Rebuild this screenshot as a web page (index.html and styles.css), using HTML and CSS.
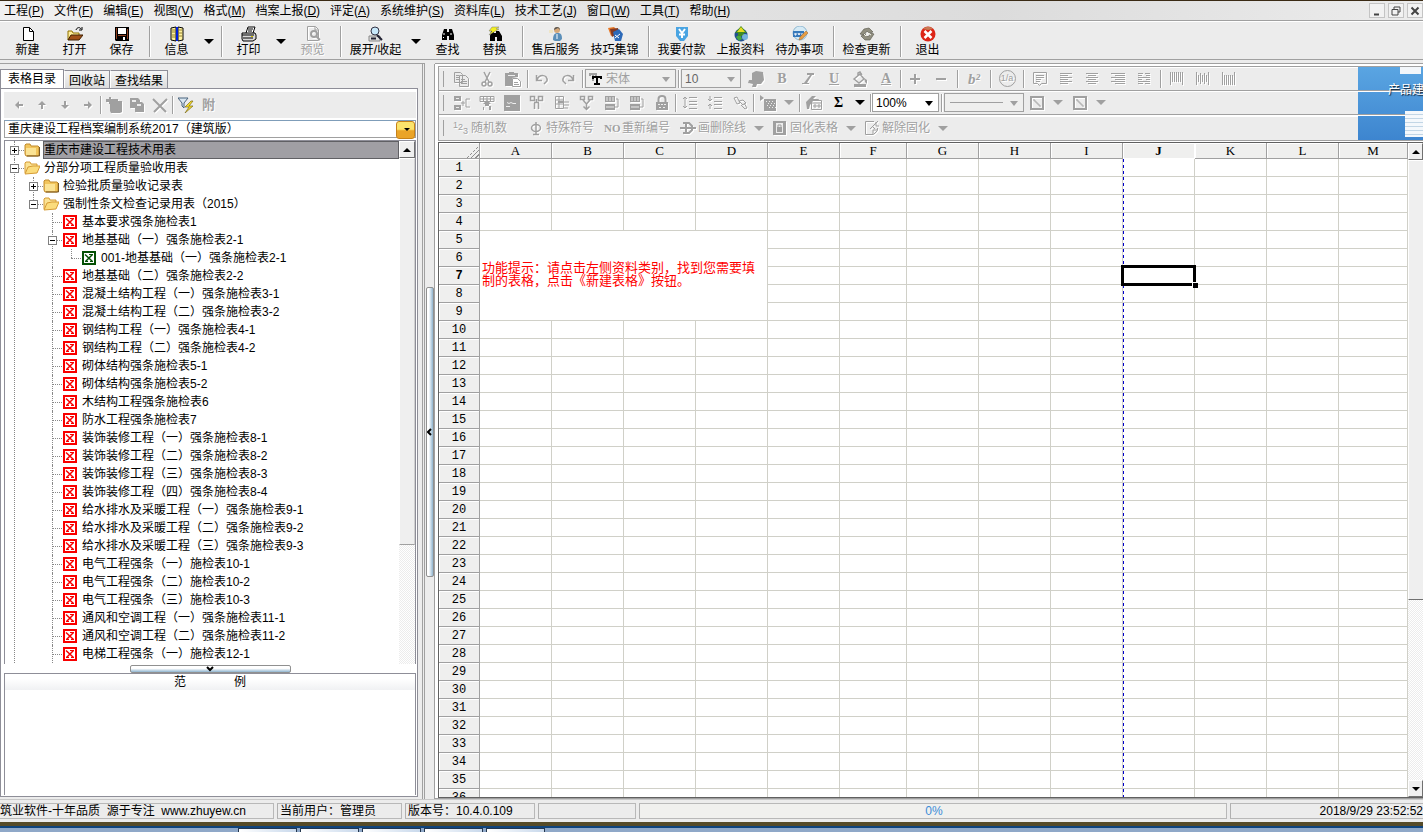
FILE: index.html
```html
<!DOCTYPE html>
<html lang="zh-CN">
<head>
<meta charset="utf-8">
<title>重庆建设工程档案编制系统2017</title>
<link rel="stylesheet" href="styles.css">
</head>
<body>
<svg class="sprite" aria-hidden="true">
  <symbol id="xls" viewBox="0 0 14 14"><path fill="currentColor" d="M0 0h14v14H0z"/><path fill="#fff" d="M2 2h10v10H2z"/><path d="M3 3.500l7.500 7M10.500 3.500L3.500 10.500" stroke="currentColor" stroke-width="1.500"/><path fill="currentColor" d="M7 3h4v1H7zM8 10h3v1H8zM3 10h3v1H3z"/></symbol>
  <symbol id="folder" viewBox="0 0 16 14"><path d="M1 11V2l1-1h4l1 2h7l1 1v8l-1 1H2z" fill="#f2c55c" stroke="#c08a2c"/><path d="M2 5h10v7H2z" fill="#fbe394"/><path d="M3 13h12.500V4" fill="none" stroke="#7a5a28"/></symbol>
  <symbol id="folder-open" viewBox="0 0 16 14"><path d="M1 12V2l1-1h4l1 2h6v3" fill="#fbe394" stroke="#d69b34"/><path d="M1 13L4 6l5-1h7l-3 7z" fill="#fbdc7c" stroke="#d69b34"/></symbol>
  <symbol id="merge" viewBox="0 0 16 16"><path d="M0 1h7v5H0zM0 10h7v5H0z" fill="currentColor"/><path d="M2 3h3v1H2zM2 12h3v1H2z" fill="#ececec"/><path d="M7 8h4M9 6v5M16 4h-4v8h4" fill="none" stroke="currentColor"/></symbol>
  <symbol id="layers" viewBox="0 0 16 16"><path d="M1 1h10v6H1zM1 9h10v6H1z" fill="currentColor"/><path d="M2 3h2m1 0h2m1 0h2M2 5h2m1 0h2m1 0h2M2 12h8" stroke="#ececec"/><path d="M12 4h2v8h-3" fill="none" stroke="currentColor"/></symbol>
  <symbol id="diagonal" viewBox="0 0 14 14"><path d="M1 1h12v12H1z" fill="none" stroke="currentColor" stroke-width="2"/><path d="M3 4h2v2h2v2h2v2h2" fill="none" stroke="currentColor"/></symbol>
</svg>

<nav class="menubar" aria-label="主菜单">
  <button>工程(<u>P</u>)</button><button>文件(<u>F</u>)</button><button>编辑(<u>E</u>)</button><button>视图(<u>V</u>)</button><button>格式(<u>M</u>)</button><button>档案上报(<u>D</u>)</button><button>评定(<u>A</u>)</button><button>系统维护(<u>S</u>)</button><button>资料库(<u>L</u>)</button><button>技术工艺(<u>J</u>)</button><button>窗口(<u>W</u>)</button><button>工具(<u>T</u>)</button><button>帮助(<u>H</u>)</button>
  <div class="mdi">
    <button aria-label="最小化"><svg viewBox="0 0 12 12"><path d="M3 9.500h5" stroke="#444" stroke-width="2"/></svg></button>
    <button aria-label="还原"><svg viewBox="0 0 12 12"><path d="M4 4V2h6v5H8M2 4.500h6V10H2z" fill="none" stroke="#444"/></svg></button>
    <button aria-label="关闭"><svg viewBox="0 0 12 12"><path d="M2.500 2.500l7 7m0-7l-7 7" stroke="#444" stroke-width="2"/></svg></button>
  </div>
</nav>

<div class="mainbar" role="toolbar" aria-label="常用">
  <button class="tool"><svg viewBox="0 0 16 16"><path d="M3.500 1.500h6l4 4v9h-10z" fill="#fff" stroke="#000"/><path d="M9.500 1.500v4h4" fill="none" stroke="#000"/></svg>新建</button>
  <button class="tool"><svg viewBox="0 0 16 16"><path d="M1 14V5h4l1 2h6v3" fill="#ffee9a" stroke="#907000"/><path d="M1 14l3-5h12l-4 5z" fill="#a05018" stroke="#402000"/><path d="M9 4c1-3 4-3 5-1m1-2v3h-3" fill="none" stroke="#000"/></svg>打开</button>
  <button class="tool"><svg viewBox="0 0 16 16"><path d="M1 1h14v14H2l-1-1z" fill="#000"/><path d="M4 2h8v6H4z" fill="#fff"/><path d="M2 2h1v11H2zm11 1h1v10h-1zM4 9h8v1H4z" fill="#904020"/><path d="M9 11h2v3H9z" fill="#fff"/></svg>保存</button>
  <span class="rule"></span>
  <button class="tool"><svg viewBox="0 0 16 16"><path d="M2 2l5-1v14l-5-1zM14 2L9 1v14l5-1z" fill="#fff2a0" stroke="#000"/><path d="M7 1h2v14H7z" fill="#0020e0"/><path d="M3 4h3M3 6h3M3 9h3M3 11h3M10 4h3M10 7h3M10 10h3" stroke="#665000" stroke-width=".7"/></svg>信息</button>
  <button class="drop" aria-label="信息选项"></button>
  <span class="rule"></span>
  <button class="tool"><svg viewBox="0 0 16 16"><path d="M5 7l2-6h7l-2 6" fill="#fff" stroke="#000"/><path d="M7 3h5M7 5h4" stroke="#000"/><path d="M1 7h13l1 2v4l-3 2H2l-1-2z" fill="#d8d8d8" stroke="#000"/><path d="M1 9h12M2 12h10" stroke="#000"/><path d="M10 10h2v1h-2z" fill="#d0c000"/></svg>打印</button>
  <button class="drop" aria-label="打印选项"></button>
  <button class="tool" disabled><svg viewBox="0 0 16 16"><path d="M2.500.500h8l3 3v11h-11zM10 1v3h3" fill="none" stroke="currentColor"/><circle cx="9" cy="8" r="3" fill="none" stroke="currentColor" stroke-width="2"/><path d="M11 10l4 4" stroke="currentColor" stroke-width="2"/></svg>预览</button>
  <span class="rule"></span>
  <button class="tool mid"><svg viewBox="0 0 16 16"><path d="M1 10h11v5H1z" fill="#ddd" stroke="#888"/><path d="M3 12.500h5M9 9l5 5" stroke="#223" stroke-width="2"/><circle cx="7" cy="5" r="4" fill="#c8e8fa" stroke="#334"/></svg>展开/收起</button>
  <button class="drop" aria-label="展开选项"></button>
  <button class="tool"><svg viewBox="0 0 16 16"><path d="M4 3h3v3h2V3h3l2 6v5H9v-4H7v4H2V9z"/><path d="M4 7v2M11 7v2M3.500 11v1" stroke="#fff"/></svg>查找</button>
  <button class="tool"><svg viewBox="0 0 16 16"><path d="M4 5h3v2h2V5h3l3 5v5h-5v-4H8v4H3v-5z"/><path d="M5 1h7L9 3h3L2 9l3-4H2z" fill="#f4f020" stroke="#777" stroke-width=".5"/></svg>替换</button>
  <span class="rule"></span>
  <button class="tool long"><svg viewBox="0 0 16 16"><path d="M5 14c0-6 2-7 5-7s4 2 4 6l-2 2H7z" fill="#5b8fb9"/><circle cx="9" cy="4" r="3" fill="#d6a878"/><path d="M6 4c0-4 6-4 6 0L10 2z" fill="#555"/><path d="M1 4h4v3H1z" fill="#efe6c8"/><path d="M9 8v5" stroke="#fff"/></svg>售后服务</button>
  <button class="tool long"><svg viewBox="0 0 16 16"><path d="M1 2l6-1 5 5-8 4z" fill="#e87824"/><path d="M3 3l8-1 1 5-7 4z" fill="#823a24"/><path d="M6 6l6-3 4 5-2 7H8z" fill="#2c69b8"/><path d="M8 9l4 3M8 12l5-4" stroke="#fff"/></svg>技巧集锦</button>
  <span class="rule"></span>
  <button class="tool long"><svg viewBox="0 0 16 16"><path d="M2 1h12v9l-4 5H6l-4-5z" fill="#49a4e2"/><path d="M5 3l3 4 3-4M8 7v5M5 8.500h6" fill="none" stroke="#fff" stroke-width="2"/></svg>我要付款</button>
  <button class="tool long"><svg viewBox="0 0 16 16"><circle cx="8" cy="9" r="6.500" fill="#204f91"/><path d="M3 11l4-3 2 5-3 2z" fill="#45a640"/><path d="M8 0l6 7h-3v3H5V7H2z" fill="#3f8a24"/><path d="M8 1l4 5H4z" fill="#e6dc20"/><circle cx="12" cy="11" r="3" fill="#76b3dd"/></svg>上报资料</button>
  <button class="tool long"><svg viewBox="0 0 16 16"><circle cx="8" cy="7" r="7" fill="#d5eaf5" stroke="#91b9d1"/><path d="M1 5h11v6H1z" fill="#3779bb"/><path d="M3 7v2h1V7m2 0l1 2 1-2m2 0v2" fill="none" stroke="#fff"/><path d="M7 14l1-3 6-6 2 2-6 6z" fill="#e59c43" stroke="#a0642a" stroke-width=".5"/></svg>待办事项</button>
  <span class="rule"></span>
  <button class="tool long"><svg viewBox="0 0 16 16"><path d="M1 8l4-5 5-1 4 4-4 1-2-2-3 4zM15 8l-4 6H6l-4-4 4-2 3 3 3-4z" fill="#918f80" stroke="#565448" stroke-width=".6"/><path d="M5 8l2 2 2-3 3 2" fill="none" stroke="#f7f6ed"/></svg>检查更新</button>
  <span class="rule"></span>
  <button class="tool"><svg viewBox="0 0 16 16"><circle cx="8" cy="8" r="7.500" fill="#dd2517"/><path d="M3 3c3-3 7-3 10 0L8 4z" fill="#c77a53"/><path d="M4.500 5l7 7m0-7l-7 7" stroke="#fff" stroke-width="2.500"/></svg>退出</button>
</div>

<main class="workspace">
  <section class="side">
    <div class="tabs" role="tablist">
      <button role="tab" class="tab on" aria-selected="true">表格目录</button>
      <button role="tab" class="tab">回收站</button>
      <button role="tab" class="tab">查找结果</button>
    </div>
    <div class="sidebody">
      <div class="sidebar-tools" role="toolbar" aria-label="目录工具">
        <button disabled aria-label="左移"><svg viewBox="0 0 16 16"><path d="M4 8l4-4v3h4v2H8v3z" fill="currentColor"/></svg></button>
        <button disabled aria-label="上移"><svg viewBox="0 0 16 16"><path d="M8 4l4 4H9v4H7V8H4z" fill="currentColor"/></svg></button>
        <button disabled aria-label="下移"><svg viewBox="0 0 16 16"><path d="M8 12L4 8h3V4h2v4h3z" fill="currentColor"/></svg></button>
        <button disabled aria-label="右移"><svg viewBox="0 0 16 16"><path d="M12 8L8 12V9H4V7h4V4z" fill="currentColor"/></svg></button>
        <span class="vr"></span>
        <button disabled aria-label="新建表格"><svg viewBox="0 0 16 16"><path d="M3 0h2v2h7v2h4v11l-2 1H5l-1-2V7H3V5H0V2h3z" fill="currentColor"/></svg></button>
        <button disabled aria-label="复制表格"><svg viewBox="0 0 16 16"><path d="M1 1h8l2 2v2h2l2 2v8H6v-4H1z" fill="currentColor"/><path d="M3 3h4v2H3zM8 7h4v2H8z" fill="#ececec"/></svg></button>
        <button disabled aria-label="删除表格"><svg viewBox="0 0 16 16"><path d="M1 2l13 13M15 2L2 15" stroke="currentColor" stroke-width="2"/></svg></button>
        <span class="vr"></span>
        <button aria-label="筛选"><svg viewBox="0 0 16 16"><path d="M0 1h10L6 6v5L4 9V6z" fill="#d9e6f0" stroke="#49637c"/><path d="M13 4l-6 6h4l-4 6 8-7h-4l4-5z" fill="#f6de22" stroke="#7d6c1d" stroke-width=".7"/></svg></button>
        <button class="attach" disabled>附</button>
      </div>
      <label class="combo system"><select aria-label="资料系统"><option>重庆建设工程档案编制系统2017（建筑版）</option></select></label>
      <div class="treebox">
        <ul class="tree">
          <li><div class="row"><button class="toggle plus" aria-label="展开"></button><i></i><svg class="fold"><use href="#folder"/></svg><span class="label picked">重庆市建设工程技术用表</span></div></li>
          <li><div class="row"><button class="toggle" aria-label="折叠"></button><i></i><svg class="fold"><use href="#folder-open"/></svg><span class="label">分部分项工程质量验收用表</span></div>
            <ul>
              <li><div class="row"><button class="toggle plus" aria-label="展开"></button><i></i><svg class="fold"><use href="#folder"/></svg><span class="label">检验批质量验收记录表</span></div></li>
              <li class="end"><div class="row"><button class="toggle" aria-label="折叠"></button><i></i><svg class="fold"><use href="#folder-open"/></svg><span class="label">强制性条文检查记录用表（2015）</span></div>
                <ul>
                  <li><div class="row leaf"><i></i><svg class="xls"><use href="#xls"/></svg><span class="label">基本要求强条施检表1</span></div></li>
                  <li><div class="row"><button class="toggle" aria-label="折叠"></button><i></i><svg class="xls"><use href="#xls"/></svg><span class="label">地基基础（一）强条施检表2-1</span></div>
                    <ul><li class="end"><div class="row leaf"><i></i><svg class="xls green"><use href="#xls"/></svg><span class="label">001-地基基础（一）强条施检表2-1</span></div></li></ul></li>
                  <li><div class="row leaf"><i></i><svg class="xls"><use href="#xls"/></svg><span class="label">地基基础（二）强条施检表2-2</span></div></li>
                  <li><div class="row leaf"><i></i><svg class="xls"><use href="#xls"/></svg><span class="label">混凝土结构工程（一）强条施检表3-1</span></div></li>
                  <li><div class="row leaf"><i></i><svg class="xls"><use href="#xls"/></svg><span class="label">混凝土结构工程（二）强条施检表3-2</span></div></li>
                  <li><div class="row leaf"><i></i><svg class="xls"><use href="#xls"/></svg><span class="label">钢结构工程（一）强条施检表4-1</span></div></li>
                  <li><div class="row leaf"><i></i><svg class="xls"><use href="#xls"/></svg><span class="label">钢结构工程（二）强条施检表4-2</span></div></li>
                  <li><div class="row leaf"><i></i><svg class="xls"><use href="#xls"/></svg><span class="label">砌体结构强条施检表5-1</span></div></li>
                  <li><div class="row leaf"><i></i><svg class="xls"><use href="#xls"/></svg><span class="label">砌体结构强条施检表5-2</span></div></li>
                  <li><div class="row leaf"><i></i><svg class="xls"><use href="#xls"/></svg><span class="label">木结构工程强条施检表6</span></div></li>
                  <li><div class="row leaf"><i></i><svg class="xls"><use href="#xls"/></svg><span class="label">防水工程强条施检表7</span></div></li>
                  <li><div class="row leaf"><i></i><svg class="xls"><use href="#xls"/></svg><span class="label">装饰装修工程（一）强条施检表8-1</span></div></li>
                  <li><div class="row leaf"><i></i><svg class="xls"><use href="#xls"/></svg><span class="label">装饰装修工程（二）强条施检表8-2</span></div></li>
                  <li><div class="row leaf"><i></i><svg class="xls"><use href="#xls"/></svg><span class="label">装饰装修工程（三）强条施检表8-3</span></div></li>
                  <li><div class="row leaf"><i></i><svg class="xls"><use href="#xls"/></svg><span class="label">装饰装修工程（四）强条施检表8-4</span></div></li>
                  <li><div class="row leaf"><i></i><svg class="xls"><use href="#xls"/></svg><span class="label">给水排水及采暖工程（一）强条施检表9-1</span></div></li>
                  <li><div class="row leaf"><i></i><svg class="xls"><use href="#xls"/></svg><span class="label">给水排水及采暖工程（二）强条施检表9-2</span></div></li>
                  <li><div class="row leaf"><i></i><svg class="xls"><use href="#xls"/></svg><span class="label">给水排水及采暖工程（三）强条施检表9-3</span></div></li>
                  <li><div class="row leaf"><i></i><svg class="xls"><use href="#xls"/></svg><span class="label">电气工程强条（一）施检表10-1</span></div></li>
                  <li><div class="row leaf"><i></i><svg class="xls"><use href="#xls"/></svg><span class="label">电气工程强条（二）施检表10-2</span></div></li>
                  <li><div class="row leaf"><i></i><svg class="xls"><use href="#xls"/></svg><span class="label">电气工程强条（三）施检表10-3</span></div></li>
                  <li><div class="row leaf"><i></i><svg class="xls"><use href="#xls"/></svg><span class="label">通风和空调工程（一）强条施检表11-1</span></div></li>
                  <li><div class="row leaf"><i></i><svg class="xls"><use href="#xls"/></svg><span class="label">通风和空调工程（二）强条施检表11-2</span></div></li>
                  <li><div class="row leaf"><i></i><svg class="xls"><use href="#xls"/></svg><span class="label">电梯工程强条（一）施检表12-1</span></div></li>
                </ul></li>
            </ul></li>
        </ul>
        <div class="scroll tree-scroll"><button class="up" aria-label="向上滚动"></button><div class="thumb"></div></div>
      </div>
      <button class="hsplit" aria-label="收起范例"><svg viewBox="0 0 8 6"><path d="M1 1l3 3 3-3" fill="none" stroke="#000" stroke-width="2"/></svg></button>
      <div class="sample"><div class="sample-head"><span>范</span><span>例</span></div></div>
    </div>
  </section>

  <div class="vsplit"><button aria-label="收起目录"><svg viewBox="0 0 6 8"><path d="M4 1L1 4l3 3" fill="none" stroke="#000" stroke-width="2"/></svg></button></div>

  <section class="editor">
    <div class="formatbars">
      <div class="bars">
        <div class="bar first" role="toolbar" aria-label="格式">
          <button disabled aria-label="复制"><svg viewBox="0 0 16 16"><path d="M1.500 1.500h6l2 2v8h-8zM6.500 4.500h6l3 3v8h-9z" fill="#ececec" stroke="currentColor"/><path d="M3 4.500h3M3 6.500h3M3 8.500h3M8 8.500h4M8 10.500h6M8 12.500h6" stroke="currentColor"/></svg></button>
          <button disabled aria-label="剪切"><svg viewBox="0 0 16 16"><path d="M5 1l5 10M11 1L6 11" stroke="currentColor" stroke-width="1.500"/><circle cx="5" cy="13" r="2" fill="none" stroke="currentColor" stroke-width="1.500"/><circle cx="11" cy="13" r="2" fill="none" stroke="currentColor" stroke-width="1.500"/></svg></button>
          <button disabled aria-label="粘贴"><svg viewBox="0 0 16 16"><path d="M0 2h4V1h5v1h4v4l-6 1v8H0z" fill="currentColor"/><path d="M7.500 7.500h5l3 3v5h-8z" fill="#fff" stroke="currentColor"/><path d="M9 11.500h4M9 13.500h5" stroke="#a0a0a0"/><path d="M3 4.500h7" stroke="#ececec"/></svg></button>
          <span class="vr"></span>
          <button disabled aria-label="撤消"><svg viewBox="0 0 16 16"><path d="M2.500 4v5.500H8M3 9c2-6 11-6 10 1l-3 3" fill="none" stroke="currentColor" stroke-width="1.500"/></svg></button>
          <button disabled aria-label="重做"><svg viewBox="0 0 16 16"><path d="M13.500 4v5.500H8M13 9C11 3 2 3 3 10l3 3" fill="none" stroke="currentColor" stroke-width="1.500"/></svg></button>
          <span class="vr"></span>
          <label class="combo font off"><svg viewBox="0 0 14 12"><path d="M0 0h8v3H6V2H5v6H3V2H2v1H0z" fill="#a0a0a0"/><path d="M3 3h10v3h-2V5H9v5h2v2H5v-2h2V5H5v1H3z" fill="#000"/></svg><select disabled aria-label="字体"><option>宋体</option></select></label>
          <span class="vr"></span>
          <label class="combo size off"><select disabled aria-label="字号"><option>10</option></select></label>
          <button disabled aria-label="格式刷"><svg viewBox="0 0 16 16"><path d="M4 2l4-2 7 1 1 8-3 4H9l-1 3H4l1-3-5-1 1-3h3z" fill="currentColor"/></svg></button>
          <button disabled class="letter">B</button>
          <button disabled aria-label="斜体"><svg viewBox="0 0 16 16"><path d="M7 2h7v2h-2L7 12h2v1H2v-1h2l6-8H7z" fill="currentColor"/></svg></button>
          <button disabled class="letter under">U</button>
          <button disabled aria-label="填充色"><svg viewBox="0 0 16 16"><path d="M2 13h12v3H2z" fill="currentColor"/><path d="M2 8l6-5 4 5-5 4zM6 5V2l2-1 2 3" fill="none" stroke="currentColor" stroke-width="1.500"/><path d="M12 7l3 2v4l-2-2z" fill="currentColor"/></svg></button>
          <button disabled class="letter under">A</button>
          <span class="vr"></span>
          <button disabled aria-label="增加"><svg viewBox="0 0 16 16"><path d="M3 8h10M8 3v10" stroke="currentColor" stroke-width="2"/></svg></button>
          <button disabled aria-label="减少"><svg viewBox="0 0 16 16"><path d="M3 8h10" stroke="currentColor" stroke-width="2"/></svg></button>
          <span class="vr wide"></span>
          <button disabled class="letter italic">b²</button>
          <span class="vr wide"></span>
          <button disabled class="fraction"><span>1/a</span></button>
          <span class="vr wide"></span>
          <button disabled aria-label="自动换行"><svg viewBox="0 0 16 16"><path d="M1.500 1.500h13v11h-5l-2 2-2-2h-4z" fill="none" stroke="currentColor"/><path d="M4 4.500h8M4 6.500h8M4 8.500h5M4 10.500h4" stroke="currentColor"/></svg></button>
          <button disabled aria-label="左对齐"><svg viewBox="0 0 16 16"><path d="M2 2.500h12M2 4.500h8M2 6.500h12M2 8.500h8M2 10.500h12M2 12.500h8" stroke="currentColor"/></svg></button>
          <button disabled aria-label="居中"><svg viewBox="0 0 16 16"><path d="M2 2.500h12M4 4.500h8M2 6.500h12M4 8.500h8M2 10.500h12M4 12.500h8" stroke="currentColor"/></svg></button>
          <button disabled aria-label="右对齐"><svg viewBox="0 0 16 16"><path d="M1 2.500h14M5 4.500h10M1 6.500h14M5 8.500h10M1 10.500h14M5 12.500h10" stroke="currentColor"/></svg></button>
          <button disabled aria-label="分散对齐"><svg viewBox="0 0 16 16"><path d="M2 2.500h5m2 0h5M2 4.500h4m4 0h4M2 6.500h12M2 8.500h4m4 0h4M2 10.500h12M2 12.500h5m2 0h5" stroke="currentColor"/></svg></button>
          <span class="vr wide"></span>
          <button disabled aria-label="顶端对齐"><svg viewBox="0 0 16 16"><path d="M1.500 1v13M3.500 1v10M5.500 1v10M7.500 1v10M9.500 1v10M11.500 1v10M13.500 1v13" stroke="currentColor"/></svg></button>
          <button disabled aria-label="垂直居中"><svg viewBox="0 0 16 16"><path d="M1.500 1v13M3.500 4v7M5.500 2v11M7.500 4v7M9.500 2v11M11.500 4v7M13.500 1v13" stroke="currentColor"/></svg></button>
          <button disabled aria-label="底端对齐"><svg viewBox="0 0 16 16"><path d="M1.500 1v13M3.500 4v10M5.500 4v10M7.500 4v10M9.500 4v10M11.500 4v10M13.500 1v13" stroke="currentColor"/></svg></button>
        </div>
        <div class="bar second" role="toolbar" aria-label="表格">
          <button disabled aria-label="插入单元格"><svg><use href="#merge"/></svg></button>
          <button disabled aria-label="插入列"><svg viewBox="0 0 16 16"><path d="M1 1.500h14v5H1zM1 4h14M4.500 1v5M8 1v5M11.500 1v5" fill="none" stroke="currentColor"/><path d="M8 5l4 4h-2v2H6V9H4zM4 12h1v3H4zM10 11h2v4h-2z" fill="currentColor"/></svg></button>
          <button disabled aria-label="单元格属性"><svg viewBox="0 0 16 16"><path d="M0 0h16v16H0z" fill="currentColor"/><path d="M3 7.500l2 1 2-1 2 1h3M2 11.500h4" stroke="#eee" fill="none"/></svg></button>
          <button disabled aria-label="拆分"><svg viewBox="0 0 16 16"><path d="M1.500 1.500h4v4h-4zM9.500 1.500h4v4h-4zM7.500 4v4M5 7.500h5M5.500 8v6M9.500 8v6" fill="none" stroke="currentColor" stroke-width="1.500"/></svg></button>
          <button disabled aria-label="插入行"><svg viewBox="0 0 16 16"><path d="M1.500 1.500h8v12h-8zM1 5h9M1 9h9M5 1v12M10 7h5M10 10h5M10 13h4" fill="none" stroke="currentColor"/><path d="M4 6h6v2H4z" fill="currentColor"/></svg></button>
          <button disabled aria-label="合并列"><svg viewBox="0 0 16 16"><path d="M1.500 1.500h4v3h-4zM9.500 1.500h4v3h-4zM4 5l3.500 4v5M11 5L7.500 9M4.500 11.500l3 3 3-3" fill="none" stroke="currentColor" stroke-width="1.500"/></svg></button>
          <button disabled aria-label="上移一层"><svg><use href="#layers"/></svg></button>
          <button disabled aria-label="下移一层"><svg><use href="#layers"/></svg></button>
          <button disabled aria-label="锁定"><svg viewBox="0 0 16 16"><path d="M4.500 8V4c0-4 7-4 7 0v4" fill="none" stroke="currentColor" stroke-width="2"/><path d="M2 7h12v8H2z" fill="currentColor"/><path d="M4 9.500h2m1 0h2m1 0h2M5 12.500h2m2 0h2" stroke="#eee"/></svg></button>
          <span class="vr"></span>
          <button disabled aria-label="增加行高"><svg viewBox="0 0 16 16"><path d="M3 2v11M1 4l2-2 2 2M1 11l2 2 2-2M7 2.500h8M7 6.500h8M7 9.500h8M7 13.500h8" fill="none" stroke="currentColor"/></svg></button>
          <button disabled aria-label="减少行高"><svg viewBox="0 0 16 16"><path d="M3 1v5M1 4l2 2 2-2M3 14V9M1 11l2-2 2 2M7 2.500h8M7 6.500h8M7 9.500h8M7 13.500h8" fill="none" stroke="currentColor"/></svg></button>
          <button disabled aria-label="字符"><svg viewBox="0 0 16 16"><path d="M2 3l3-1 3 6-3 1zM7 6l4-1 3 3-3 2zM9 10l4 4 2-1-3-5" fill="none" stroke="currentColor"/></svg></button>
          <span class="vr"></span>
          <button disabled aria-label="图片"><svg viewBox="0 0 16 16"><path d="M4 4h12v12H4z" fill="currentColor"/><path d="M6 6.500h1m2 0h1m2 0h1m-5 2h1m2 0h1m2 0h1m-8 2h1m2 0h1m2 0h1m-5 2h1m2 0h1m2 0h1" stroke="#ececec"/><path d="M0 0l4 3-4 3z" fill="currentColor"/></svg></button>
          <button disabled class="drop" aria-label="图片选项"></button>
          <span class="vr"></span>
          <button disabled aria-label="函数"><svg viewBox="0 0 16 16"><path d="M5.500 5.500h10v9h-10zM5 8h10M8 10h2v2H8zM12 10h2v2h-2z" fill="none" stroke="currentColor"/><path d="M0 7l6-6h4L7 4h6l-1 2H7L4 10l-1 4H1z" fill="currentColor"/></svg></button>
          <button class="letter">Σ</button>
          <button class="drop" aria-label="求和选项"></button>
          <span class="vr"></span>
          <label class="combo zoom"><select aria-label="缩放"><option>100%</option></select></label>
          <span class="vr"></span>
          <label class="combo line off"><span></span><select disabled aria-label="线型"><option></option></select></label>
          <button disabled aria-label="斜线"><svg class="s14"><use href="#diagonal"/></svg></button>
          <button disabled class="drop" aria-label="斜线选项"></button>
          <button disabled aria-label="边框"><svg class="s14"><use href="#diagonal"/></svg></button>
          <button disabled class="drop" aria-label="边框选项"></button>
        </div>
        <div class="bar third" role="toolbar" aria-label="编辑">
          <button disabled class="cmd min"><span class="digits"><b>1</b><b>2</b><b>3</b></span>随机数</button>
          <button disabled class="cmd"><svg viewBox="0 0 16 16"><path d="M8 2v13M5 14.500h6" stroke="currentColor" stroke-width="1.500"/><ellipse cx="8" cy="8" rx="4.500" ry="3.500" fill="none" stroke="currentColor" stroke-width="1.500"/></svg>特殊符号</button>
          <button disabled class="cmd"><span class="no">NO</span>重新编号</button>
          <button disabled class="cmd"><svg viewBox="0 0 16 16"><path d="M3 3h6l3 3v4l-3 3H3M6 3v10" fill="none" stroke="currentColor" stroke-width="2"/><path d="M0 8h16" stroke="currentColor" stroke-width="2"/></svg>画删除线</button>
          <button disabled class="drop" aria-label="删除线选项"></button>
          <button disabled class="cmd"><svg viewBox="0 0 16 16"><path d="M1 1h13v14H1z" fill="currentColor"/><path d="M4 3h7v10H4z" fill="#ececec"/><path d="M5 7h5v5H5z" fill="currentColor"/><path d="M6 7V5h3v2" fill="none" stroke="currentColor"/></svg>固化表格</button>
          <button disabled class="drop" aria-label="固化选项"></button>
          <button disabled class="cmd"><svg viewBox="0 0 16 16"><path d="M10 1.500H1.500v13h8l4-4V8" fill="none" stroke="currentColor"/><path d="M9 14v-4h4M6 9l8-8M12 2v4h3M8 6l3 3" fill="none" stroke="currentColor"/></svg>解除固化</button>
          <button disabled class="drop" aria-label="解除固化选项"></button>
        </div>
      </div>
      <aside class="desktop"><div></div><p>产品建</p><div class="page"></div></aside>
    </div>
    <div class="sheetbox">
      <div class="sheetview">
        <table class="sheet">
          <colgroup><col class="c-head"><col><col><col><col><col><col class="c-f"><col><col><col><col><col><col><col class="c-rest"></colgroup>
          <thead><tr id="heads"></tr></thead>
          <tbody id="cells"></tbody>
        </table>
      </div>
      <div class="scroll sheet-scroll"><button class="up" aria-label="向上滚动"></button><div class="thumb"></div><button class="down" aria-label="向下滚动"></button></div>
    </div>
  </section>
</main>

<footer class="status">
  <span class="s1">筑业软件-十年品质&nbsp; 源于专注&nbsp; www.zhuyew.cn</span>
  <span class="s2">当前用户：管理员</span>
  <span class="s3">版本号：10.4.0.109</span>
  <span class="s4"></span>
  <span class="s5">0%</span>
  <span class="s6">2018/9/29 23:52:52</span>
</footer>
<div class="taskbar"><i></i><i></i><i></i><i></i><i></i></div>
<script src="app.js"></script>
</body>
</html>
```
FILE: styles.css
```css
* { box-sizing: border-box; }
body { margin: 0; height: 100vh; display: flex; flex-direction: column; overflow: hidden; background: #ececec; color: #000; font: 12px/16px "Liberation Sans", "Noto Sans CJK SC", sans-serif; border-top: 1px solid #3a2a14; }
button { font: inherit; color: inherit; border: 0; background: none; padding: 0; margin: 0; }
button:disabled { color: #a0a0a0; text-shadow: 1px 1px #fff; }
button:disabled svg { filter: drop-shadow(1px 1px 0 #fff); }
svg { display: block; flex: none; }
.sprite { position: absolute; width: 0; height: 0; }

.menubar { display: flex; flex: none; height: 20px; padding-left: 4px; gap: 9px; align-items: center; background: linear-gradient(90deg, #f0f0f0, #dcdcdc 70%, #ececec); border-bottom: 1px solid #a0a0a0; white-space: nowrap; }
.menubar > button { margin-right: 1px; }
.mdi { margin-left: auto; display: flex; gap: 3px; }
.mdi button { width: 16px; height: 15px; display: grid; place-items: center; border: 1px solid #c4c4c4; background: #f2f2f2; }
.mdi svg { width: 12px; height: 12px; }

.mainbar { display: flex; flex: none; height: 39px; padding: 4px 4px 2px; border-top: 1px solid #fff; border-bottom: 1px solid #a0a0a0; white-space: nowrap; }
.tool { width: 47px; display: flex; flex-direction: column; align-items: center; }
.tool svg { width: 16px; height: 16px; }
.tool.mid { width: 63px; }
.tool.long { width: 59px; }
.rule { width: 1px; margin: 0 3px 0 4px; background: #a0a0a0; box-shadow: 1px 0 #fff; }
.drop { width: 17px; display: grid; place-items: center; }
.drop::after { content: ""; border: 5px solid transparent; border-top-color: currentColor; border-bottom: 0; }

.workspace { flex: 1; min-height: 0; display: flex; }
.side { width: 425px; flex: none; display: flex; flex-direction: column; margin-top: 3px; border-top: 1px solid #a0a0a0; border-right: 3px double #a0a0a0; padding: 5px 4px 2px 0; }
.tabs { display: flex; align-items: flex-end; height: 20px; flex: none; margin-bottom: -1px; }
.tab { height: 19px; padding: 2px 4px 0; border: 1px solid #8e8e98; border-left-color: #fff; border-bottom: 1px solid #8e8e98; background: linear-gradient(#f6f6f6, #dcdcdc); }
.tab.on { height: 20px; padding: 0 7px; background: #fff; border-left-color: #8e8e98; border-bottom-color: #fff; }
.sidebody { flex: 1; min-height: 0; display: flex; flex-direction: column; background: #fff; border: 1px solid #8e8e98; padding: 3px 1px 1px 3px; }
.sidebar-tools { display: flex; flex: none; align-items: center; height: 26px; padding-left: 3px; background: #ececec; }
.sidebar-tools button { width: 23px; display: grid; place-items: center; }
.sidebar-tools svg { width: 16px; height: 16px; }
.attach { font-size: 13px; font-weight: bold; }
.vr { flex: none; width: 1px; height: 18px; margin: 0 1px; background: #a0a0a0; box-shadow: 1px 0 #fff; }
.vr.wide { margin: 0 3px; }

.combo { position: relative; display: flex; align-items: center; flex: none; border: 1px solid #a0a0a0; background: #fff; }
.combo select { appearance: none; flex: 1; min-width: 0; height: 100%; border: 0; padding: 0 20px 0 3px; margin: 0; background: none; font: inherit; color: #000; opacity: 1; }
.combo::after { content: ""; position: absolute; right: 5px; top: 7px; border: 4px solid transparent; border-top: 5px solid #000; border-bottom: 0; pointer-events: none; }
.combo.off { background: #efefee; }
.combo.off select { color: #a0a0a0; }
.combo.off::after { border-top-color: #a0a0a0; }
.combo.system { height: 18px; margin: 2px 0; border-color: #7f9db9 #a0a0a0 #a0a0a0; }
.combo.system::before { content: ""; position: absolute; right: 0; top: 0; width: 17px; height: 16px; border-radius: 3px; border: 1px solid #c78218; background: linear-gradient(#fbe46c 45%, #eaa428 55%); }
.combo.system::after { border-width: 3px 3px 0; }

.treebox { flex: 1; min-height: 0; display: flex; overflow: hidden; border: 1px solid #8e8e98; border-bottom: 0; }
.tree, .tree ul { list-style: none; margin: 0; padding: 0; }
.tree { flex: 1; min-width: 0; white-space: nowrap; }
.tree ul { margin-left: 19px; }
.tree li { position: relative; }
.tree li::before { content: ""; position: absolute; left: 9px; top: 0; bottom: 0; border-left: 1px dotted #888; }
.tree li.end::before { bottom: auto; height: 9px; }
.row { position: relative; display: flex; align-items: center; height: 18px; padding-left: 5px; }
.row.leaf { padding-left: 9px; }
.row i { width: 5px; flex: none; border-top: 1px dotted #888; }
.row.leaf i { width: 10px; }
.toggle { width: 9px; height: 9px; flex: none; border: 1px solid #808080; background: linear-gradient(#000, #000) 1px 3px / 5px 1px no-repeat #fff; }
.toggle.plus { background: linear-gradient(#000, #000) 1px 3px / 5px 1px no-repeat, linear-gradient(#000, #000) 3px 1px / 1px 5px no-repeat #fff; }
.fold { width: 16px; height: 14px; }
.xls { width: 14px; height: 14px; margin: 0 1px; color: #f80000; }
.xls.green { color: #045004; }
.label { margin-left: 3px; padding: 0 1px; line-height: 18px; }
.picked { flex: 1; line-height: 16px; background: #a09fa4; border: 1px solid #606064; padding: 0; }

.scroll { flex: none; display: flex; flex-direction: column; width: 16px; background: repeating-conic-gradient(#fff 0 25%, #ececec 0 50%) 0 0 / 2px 2px; }
.scroll button, .scroll .thumb { background: #efefef; border: 1px solid #fff; border-right-color: #707070; border-bottom-color: #707070; }
.scroll button { height: 17px; flex: none; display: grid; place-items: center; }
.scroll .up::after, .scroll .down::after { content: ""; border: 4px solid transparent; border-bottom-color: #000; border-top: 0; }
.scroll .down::after { border: 4px solid transparent; border-top-color: #000; border-bottom: 0; }
.tree-scroll .thumb { height: 74%; border-color: #fff #d0d0d0 #a0a0a0 #fff; }
.sheet-scroll { width: 15px; }
.sheet-scroll .thumb { height: 440px; flex-shrink: 1; border-right: 0; }
.sheet-scroll .down { margin-top: auto; }

.hsplit { flex: none; align-self: center; width: 161px; height: 8px; margin: 1px 0 0; display: grid; place-items: center; border: 1px solid #909090; border-radius: 2px; background: linear-gradient(#fff 40%, #8fb4cf); }
.hsplit svg { width: 8px; height: 6px; }
.sample { flex: none; height: 122px; border: 1px solid #8e8e98; border-bottom: 0; }
.sample-head { display: flex; justify-content: center; gap: 48px; background: linear-gradient(#fff 30%, #f0f1f3); }

.vsplit { flex: none; width: 10px; display: flex; align-items: center; margin-top: 4px; border-right: 1px solid #a0a0a0; }
.vsplit button { width: 8px; height: 290px; margin-left: 1px; display: grid; place-items: center; border: 1px solid #909090; border-radius: 2px; background: linear-gradient(90deg, #fff 30%, #8fb4cf); }
.vsplit svg { width: 6px; height: 8px; }

.editor { flex: 1; min-width: 0; display: flex; flex-direction: column; margin-top: 3px; border-top: 1px solid #a0a0a0; border-bottom: 1px solid #a0a0a0; background: #fff; padding: 2px 0 0 3px; }
.formatbars { display: flex; flex: none; border: 1px solid #a0a0a0; border-right: 0; margin-bottom: 1px; }
.bars { flex: 1; min-width: 0; background: #ececec; }
.bar { display: flex; align-items: center; height: 24px; padding-left: 9px; border-bottom: 1px solid #a0a0a0; box-shadow: inset 0 1px #fff; background: linear-gradient(#a0a0a0, #a0a0a0) 4px 4px / 1px 16px no-repeat; overflow: hidden; }
.bar button { flex: none; width: 26px; height: 20px; display: grid; place-items: center; }
.bar svg { width: 16px; height: 16px; }
.bar svg.s14 { width: 14px; height: 14px; }
.second { padding-left: 10px; }
.second button { width: 25px; }
.third { height: 25px; border-bottom: 0; border-top: 1px solid #fff; padding-left: 9px; }
.bar .drop { width: 18px; }
.third .drop { width: 16px; }
.bar .cmd { width: auto; display: flex; align-items: center; gap: 2px; padding: 0 5px; }
.bar .cmd.min { min-width: 75px; }
.letter { font: bold 14px/16px "Liberation Serif", serif; }
.letter.under { text-decoration: underline; }
.letter.italic { font-style: italic; font-size: 15px; }
.fraction span { width: 17px; height: 17px; border: 1px solid #a0a0a0; border-radius: 50%; font-size: 9px; line-height: 15px; text-align: center; }
.no { width: 16px; font: bold 11px/16px "Liberation Serif", serif; }
.digits { display: flex; width: 16px; font-size: 9px; line-height: 9px; }
.digits b { font-weight: normal; }
.digits b:nth-child(1) { padding-bottom: 6px; }
.digits b:nth-child(2) { padding-top: 2px; }
.digits b:nth-child(3) { padding-top: 6px; }
.bar .combo { height: 19px; }
.bar .combo svg { width: 14px; height: 12px; margin: 0 0 0 3px; }
.combo.font { width: 91px; margin: 0 1px; }
.combo.size { width: 60px; margin: 0 2px 0 1px; }
.combo.size select { color: #666; }
.combo.zoom { width: 67px; margin: 0 1px 0 0; }
.combo.line { width: 80px; margin-left: 1px; }
.combo.line select { flex: none; width: 20px; padding: 0; }
.combo.line span { flex: 1; height: 1px; margin-left: 5px; background: #a0a0a0; }
.desktop { flex: none; width: 65px; overflow: hidden; background: linear-gradient(transparent 23px, #a0a0a0 23px 24px, #fff 24px 25px, transparent 25px 47px, #a0a0a0 47px 48px, #fff 48px 49px, transparent 49px), linear-gradient(#5aa5e2, #3d85cf); display: flex; flex-direction: column; align-items: flex-end; justify-content: space-between; height: 73px; }
.desktop p { margin: 0 0 6px; width: 35px; white-space: nowrap; color: #fff; text-shadow: 1px 1px 1px #123; }
.desktop div { width: 21px; height: 7px; margin-right: 2px; background: #f2f6fa; }
.desktop .page { width: 18px; height: 26px; margin: 0 0 3px; background: repeating-linear-gradient(#f4f8fc 0 3px, #c2d6e6 3px 4px); }

.sheetbox { flex: 1; min-height: 0; display: flex; border: 1px solid #606060; border-right: 0; }
.sheetview { flex: 1; min-width: 0; overflow: hidden; }
.sheet { width: 100%; table-layout: fixed; border-collapse: separate; border-spacing: 0; }
.sheet col { width: 72px; }
.sheet .c-head { width: 41px; }
.sheet .c-f { width: 67px; }
.sheet .c-rest { width: auto; }
.sheet th, .sheet td { height: 18px; padding: 0; border-right: 1px solid #d0d0c8; border-bottom: 1px solid #d0d0c8; background: #fff; }
.sheet th { background: #efefee; border-color: #a0a0a0; box-shadow: inset 1px 1px #fff; font: 12px/16px "Liberation Mono", monospace; }
.sheet thead th { height: 16px; line-height: 15px; font-family: "Liberation Serif", serif; font-size: 13px; }
.sheet .corner { background: linear-gradient(135deg, #efefee 50%, transparent 50%) right bottom / 12px 12px no-repeat, repeating-linear-gradient(135deg, #efefee 0 2px, #909090 2px 3px) right bottom / 12px 12px no-repeat #efefee; }
.sheet th.cur { font-weight: bold; }
.sheet thead th.cur { border-color: #fff; }
.sheet .break { background: repeating-linear-gradient(#0000cc 0 3px, #fff 3px 6px) 0 0 / 1px 100% no-repeat #fff; }
.sheet .tip { color: #f00; font-size: 13px; line-height: 13px; padding: 0 8px 4px 2px; vertical-align: middle; text-align: left; }
.sheet .active { position: relative; }
.active::before { content: ""; position: absolute; inset: -2px; border: 3px solid #000; }
.active::after { content: ""; position: absolute; right: -4px; bottom: -4px; width: 5px; height: 5px; background: #000; border: solid #fff; border-width: 1px 0 0 1px; box-sizing: content-box; }

.status { flex: none; display: flex; gap: 3px; height: 23px; padding: 3px 0 3px; white-space: nowrap; border-top: 1px solid #c8c8c8; background: #ececec; }
.status span { border: 1px solid #b8b8b8; border-left-color: #b0b0b0; line-height: 15px; padding-left: 2px; overflow: hidden; }
.status .s1 { width: 274px; padding: 0; border-left: 0; }
.status .s2 { width: 125px; }
.status .s3 { width: 130px; }
.status .s4 { width: 98px; }
.status .s5 { flex: 1; text-align: center; color: #3c8cd8; background: #f0f0ee; }
.status .s6 { width: 193px; padding: 0; text-align: right; border-right: 0; }
.taskbar { flex: none; display: flex; gap: 3px; height: 10px; padding: 0 0 0 238px; border-top: 4px solid #564b28; background: linear-gradient(#10447c 2px, #8fa8c8 2px); }
.taskbar i { width: 59px; margin-top: 2px; border: 1px solid #23364e; border-bottom: 0; background: linear-gradient(90deg, #fff, #c9d9ec); }
```
FILE: app.js
```js
const letters = 'ABCDEFGHIJKLM'.split('');
const heads = document.getElementById('heads');
const cells = document.getElementById('cells');

function add(row, tag, className, text) {
  const cell = document.createElement(tag);
  if (className) cell.className = className;
  if (text) cell.textContent = text;
  row.append(cell);
  return cell;
}

add(heads, 'th', 'corner');
letters.forEach(letter => add(heads, 'th', letter === 'J' ? 'cur' : '', letter));

for (let n = 1; n <= 36; n++) {
  const row = document.createElement('tr');
  add(row, 'th', n === 7 ? 'cur' : '', String(n));
  letters.forEach((letter, i) => {
    if (n >= 5 && n <= 9 && i < 4) {
      if (n === 5 && i === 0) {
        const tip = add(row, 'td', 'tip', '功能提示：请点击左侧资料类别，找到您需要填制的表格，点击《新建表格》按钮。');
        tip.colSpan = 4;
        tip.rowSpan = 5;
      }
      return;
    }
    const names = [];
    if (letter === 'J') names.push('break');
    if (letter === 'J' && n === 7) names.push('active');
    add(row, 'td', names.join(' '));
  });
  cells.append(row);
}
```
